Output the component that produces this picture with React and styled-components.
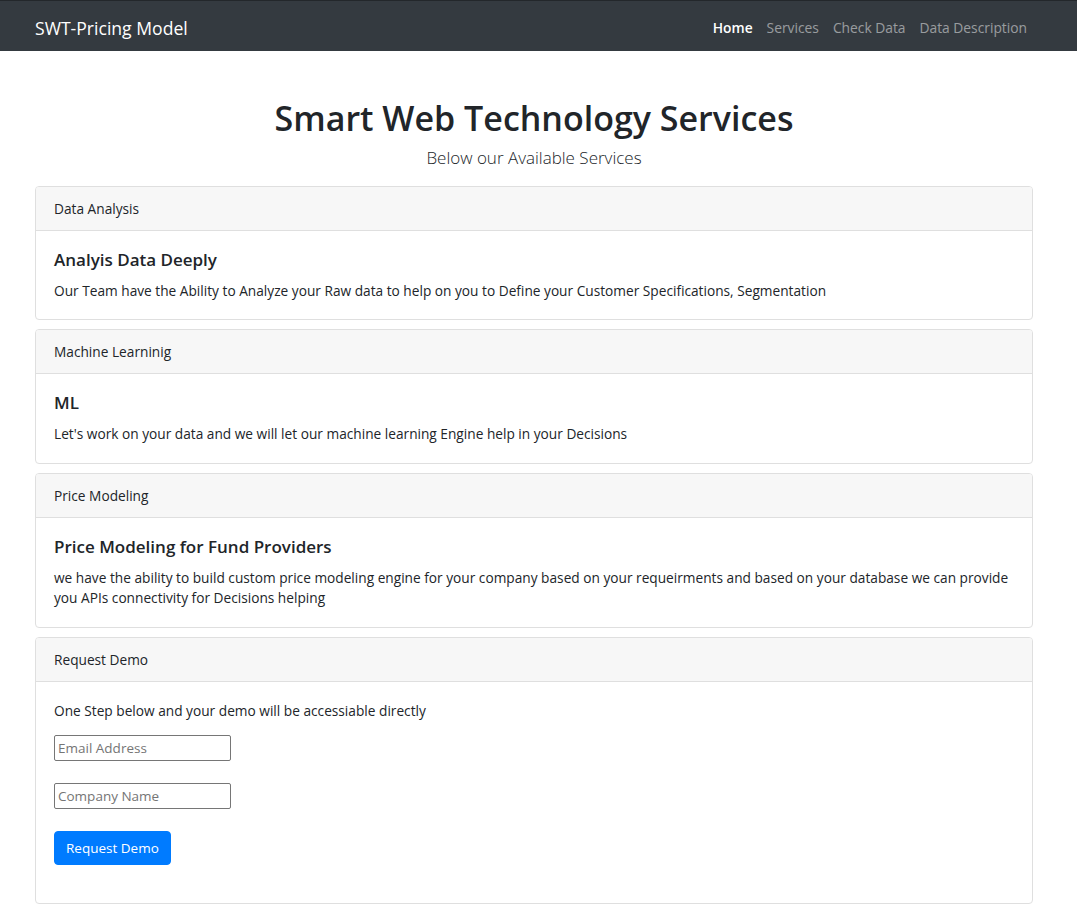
import React from 'react';
import styled, { createGlobalStyle } from 'styled-components';

const Global = createGlobalStyle`
  html, body {
    margin: 0;
    padding: 0;
    background: #fff;
  }
  body {
    font-family: "Open Sans", "Noto Sans", sans-serif;
    font-size: 13.7px;
    line-height: 21px;
    color: #212529;
  }
  * { box-sizing: border-box; }
`;

const services = [
  {
    header: 'Data Analysis',
    title: 'Analyis Data Deeply',
    text: 'Our Team have the Ability to Analyze your Raw data to help on you to Define your Customer Specifications, Segmentation',
  },
  {
    header: 'Machine Learninig',
    title: 'ML',
    text: "Let's work on your data and we will let our machine learning Engine help in your Decisions",
  },
  {
    header: 'Price Modeling',
    title: 'Price Modeling for Fund Providers',
    text: 'we have the ability to build custom price modeling engine for your company based on your requeirments and based on your database we can provide you APIs connectivity for Decisions helping',
  },
];

class App extends React.Component {
  render() {
    return (
      <>
        <Global />
        <Navbar>
          <Brand>SWT-Pricing Model</Brand>
          <NavLinks>
            <NavLink active>Home</NavLink>
            <NavLink>Services</NavLink>
            <NavLink>Check Data</NavLink>
            <NavLink>Data Description</NavLink>
          </NavLinks>
        </Navbar>
        <Main>
          <Hero>
            <h1>Smart Web Technology Services</h1>
            <Lead>Below our Available Services</Lead>
          </Hero>
          {services.map((s) => (
            <Card key={s.header}>
              <CardHeader>{s.header}</CardHeader>
              <CardBody>
                <CardTitle>{s.title}</CardTitle>
                <CardText>{s.text}</CardText>
              </CardBody>
            </Card>
          ))}
          <Card>
            <CardHeader>Request Demo</CardHeader>
            <CardBody>
              <Intro>One Step below and your demo will be accessiable directly</Intro>
              <Field>
                <Input type="text" placeholder="Email Address" />
              </Field>
              <Field>
                <Input type="text" placeholder="Company Name" />
              </Field>
              <Field last>
                <Button>Request Demo</Button>
              </Field>
            </CardBody>
          </Card>
        </Main>
      </>
    );
  }
}

const Navbar = styled.nav`
  height: 51px;
  background: #343a40;
  border-top: 1px solid #23272b;
  display: flex;
  align-items: center;
  justify-content: space-between;
  padding: 3px 43px 0 35px;
`;

const Brand = styled.a`
  color: #fff;
  font-size: 17.6px;
  line-height: 24px;
`;

const NavLinks = styled.div`
  display: flex;
`;

const NavLink = styled.a`
  padding: 0 7px;
  font-size: 13.8px;
  color: ${(p) => (p.active ? '#fff' : 'rgba(255,255,255,0.5)')};
  font-weight: ${(p) => (p.active ? 600 : 400)};
`;

const Main = styled.main`
  width: 998px;
  margin-left: 35px;
  padding-top: 46px;
`;

const Hero = styled.div`
  text-align: center;
  margin-bottom: 15px;
  h1 {
    margin: 0 0 4px;
    font-size: 34px;
    line-height: 43px;
    font-weight: 600;
  }
`;

const Lead = styled.p`
  margin: 0;
  font-size: 17px;
  line-height: 27px;
  font-weight: 300;
`;

const Card = styled.section`
  border: 1px solid #dfdfdf;
  border-radius: 4px;
  margin-bottom: 9px;
  overflow: hidden;
`;

const CardHeader = styled.div`
  background: #f7f7f7;
  border-bottom: 1px solid #dfdfdf;
  padding: 10.8px 18px;
  line-height: 21px;
`;

const CardBody = styled.div`
  padding: 18px;
`;

const CardTitle = styled.h5`
  margin: 0 0 10.8px;
  font-size: 17px;
  line-height: 21.6px;
  font-weight: 600;
`;

const CardText = styled.p`
  margin: 0;
  line-height: 20.5px;
`;

const Intro = styled.p`
  margin: 0 0 14px;
  line-height: 21.6px;
`;

const Field = styled.div`
  margin-bottom: ${(p) => (p.last ? '20px' : '22px')};
`;

const Input = styled.input`
  width: 177px;
  height: 26px;
  border: 1px solid #767676;
  border-radius: 2px;
  padding: 1px 3px;
  font-family: inherit;
  font-size: 13.5px;
  color: #212529;
  &::placeholder { color: #757575; }
`;

const Button = styled.button`
  height: 34px;
  padding: 0 11px;
  background: #007bff;
  color: #fff;
  border: 1px solid #007bff;
  border-radius: 4px;
  font-family: inherit;
  font-size: 13.5px;
`;

export default App;
